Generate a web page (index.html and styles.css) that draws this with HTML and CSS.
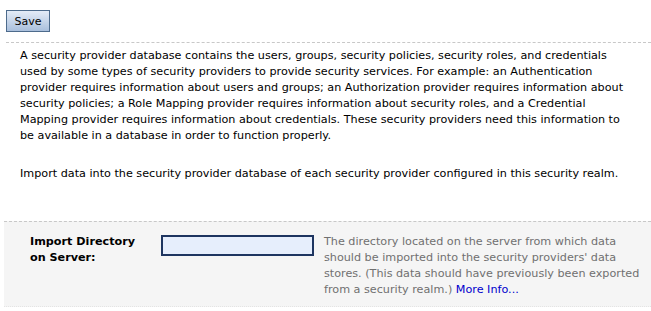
FILE: index.html
```html
<!DOCTYPE html>
<html lang="en">
<head>
  <meta charset="UTF-8" />
  <title>Import Security Data</title>
  <link rel="stylesheet" href="styles.css">
</head>
<body>
  <div class="page">
    <div class="toolbar">
      <button class="save-btn" type="button">Save</button>
    </div>

    <div class="intro">
      <p>A security provider database contains the users, groups, security policies, security roles, and credentials used by some types of security providers to provide security services. For example: an Authentication provider requires information about users and groups; an Authorization provider requires information about security policies; a Role Mapping provider requires information about security roles, and a Credential Mapping provider requires information about credentials. These security providers need this information to be available in a database in order to function properly.</p>
      <p>Import data into the security provider database of each security provider configured in this security realm.</p>
    </div>

    <div class="form-panel">
      <div class="form-row">
        <label class="field-label" for="importDir">Import Directory on Server:</label>
        <div class="field-input">
          <input type="text" id="importDir">
        </div>
        <div class="field-help">
          The directory located on the server from which data should be imported into the security providers' data stores. (This data should have previously been exported from a security realm.) <a href="#">More Info...</a>
        </div>
      </div>
    </div>
  </div>
</body>
</html>
```

FILE: styles.css
```css
* {
  margin: 0;
  padding: 0;
  box-sizing: border-box;
}

body {
  background-color: #fff;
  font-family: 'DejaVu Sans', Verdana, sans-serif;
  font-size: 11.2px;
  color: #000;
}

.page {
  padding-top: 10px;
}

.toolbar {
  padding: 0 0 10px 6px;
}

.save-btn {
  width: 44px;
  height: 22px;
  border: 1px solid #4d6b8c;
  background: linear-gradient(#e4ecf7, #a9bfdc);
  font-family: inherit;
  font-size: 11px;
  color: #000;
  cursor: pointer;
}

.intro {
  margin-left: 6px;
  border-top: 1px dashed #c8c8c8;
  padding: 5px 15px 0 14px;
}

.intro p {
  line-height: 16px;
  margin-bottom: 22px;
}

.intro p:last-child {
  margin-bottom: 0;
}

.form-panel {
  margin: 39px 0 0 4px;
  border-top: 1px dashed #c8c8c8;
  border-bottom: 1px dotted #e4e4e4;
  background-color: #f5f5f5;
  height: 86px;
}

.form-row {
  display: flex;
  padding: 12px 0 0 26px;
}

.field-label {
  width: 131px;
  padding-right: 20px;
  font-weight: bold;
  line-height: 16px;
}

.field-input input {
  width: 153px;
  height: 21px;
  margin-top: 1px;
  border: 2px solid #1e3560;
  background-color: #e6eefc;
}

.field-help {
  width: 325px;
  margin-left: 10px;
  color: #707070;
  line-height: 16px;
}

.field-help a {
  color: #0000cc;
  text-decoration: none;
}
```
